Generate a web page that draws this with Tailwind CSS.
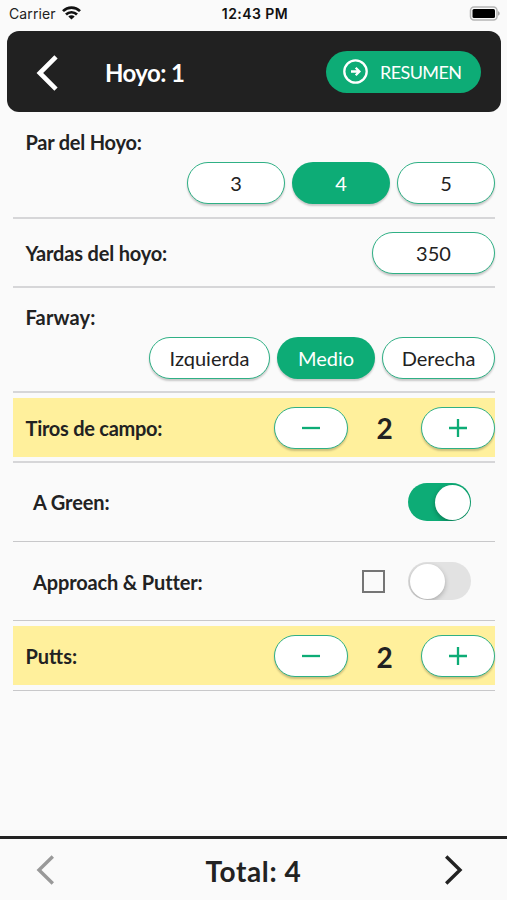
<!DOCTYPE html>
<html lang="es">
<head>
<meta charset="utf-8">
<title>Hoyo 1</title>
<script src="https://cdn.jsdelivr.net/npm/@tailwindcss/browser@4"></script>
</head>
<body class="bg-[#fafafa]">
<div class="w-[507px] h-[900px] flex flex-col bg-[#fafafa] text-[#222] overflow-hidden font-['Lato','Noto_Sans',sans-serif] text-[20px] leading-[24px]">
  <!-- status bar -->
  <div class="h-[31px] shrink-0 grid grid-cols-[1fr_auto_1fr] items-center pl-[9px] pr-[7px] pb-[4px] font-['Inter',sans-serif] text-[14px] leading-[18px] text-[#222]">
    <div class="flex items-center gap-[6px]">
      <span class="tracking-[0.1px]">Carrier</span>
      <svg class="w-[19px] h-[14px] -mt-[2px]" viewBox="0 0 19 14" fill="none" stroke="#111" stroke-width="2.7"><path d="M1 5.100a12.200 12.200 0 0 1 17 0"/><path d="M4 8.500a7.800 7.800 0 0 1 11 0"/><path d="M9.500 13.600 6.300 10.600a4.600 4.600 0 0 1 6.400 0z" fill="#111" stroke="none"/></svg>
    </div>
    <span class="font-semibold text-[#111] tracking-[0.45px] -mr-px">12:43 PM</span>
    <svg class="w-[31px] h-[15px] justify-self-end" viewBox="0 0 31 15"><rect x="1.500" y="1" width="26.500" height="13" rx="3.500" fill="#fafafa" stroke="#b5b5b5" stroke-width="1.500"/><rect x="3.500" y="3" width="22.500" height="9" rx="1.500" fill="#000"/><path d="M29 5.300c2.300.7 2.300 3.700 0 4.400z" fill="#aaa"/></svg>
  </div>
  <!-- header -->
  <header class="ml-[7px] mr-[6px] h-[81px] shrink-0 rounded-[12px] bg-[#212121] flex items-center pl-[29px] pr-[20px] text-white">
    <svg class="w-[24px] h-[36px] mt-[3px]" viewBox="0 0 24 36" fill="none" stroke="#fff" stroke-width="4.600"><path d="M20 1.800 3.800 18 20 34.200"/></svg>
    <h1 class="ml-[45px] text-[24px] leading-[28px] font-bold tracking-[-0.6px] mt-[2px]">Hoyo: 1</h1>
    <button class="ml-auto w-[155px] h-[42px] rounded-full bg-[#0dac76] flex items-center pl-[17px] gap-[12px] text-[18px]">
      <svg class="w-[25px] h-[25px]" viewBox="0 0 25 25" fill="none" stroke="#fff" stroke-width="2.300"><circle cx="12.500" cy="12.500" r="11.200"/><path d="M8 12.500h7.500M12.700 8.800l3.700 3.700-3.700 3.700"/></svg>
      <span class="tracking-[-0.6px] mt-[1px]">RESUMEN</span>
    </button>
  </header>
  <!-- hole form -->
  <main class="ml-[13px] mr-[12px] flex flex-col">
    <section class="h-[107px] border-b-2 border-[#d6d6d8] pl-[12.5px] pt-[18px]">
      <h2 class="font-bold tracking-[-0.22px]">Par del Hoyo:</h2>
      <div class="flex justify-end gap-[7px] mt-[8px]">
        <button class="w-[98px] h-[42px] rounded-full border-[1.5px] border-[#2fb085] bg-white shadow-[0_2px_2px_rgba(0,0,0,0.2)]">3</button>
        <button class="w-[98px] h-[42px] rounded-full bg-[#0dac76] text-white shadow-[0_2px_2px_rgba(0,0,0,0.2)]">4</button>
        <button class="w-[98px] h-[42px] rounded-full border-[1.5px] border-[#2fb085] bg-white shadow-[0_2px_2px_rgba(0,0,0,0.2)]">5</button>
      </div>
    </section>
    <section class="h-[69px] border-b-2 border-[#d6d6d8] pl-[12.5px] flex items-center justify-between">
      <h2 class="font-bold tracking-[-0.17px]">Yardas del hoyo:</h2>
      <button class="w-[123px] h-[42px] rounded-full border-[1.5px] border-[#2fb085] bg-white shadow-[0_2px_2px_rgba(0,0,0,0.2)] mt-px">350</button>
    </section>
    <section class="h-[105px] border-b-2 border-[#d6d6d8] pl-[12.5px] pt-[17px]">
      <h2 class="font-bold tracking-[0.15px]">Farway:</h2>
      <div class="flex justify-end gap-[7px] mt-[8px]">
        <button class="w-[121px] h-[42px] rounded-full border-[1.5px] border-[#2fb085] bg-white shadow-[0_2px_2px_rgba(0,0,0,0.2)]">Izquierda</button>
        <button class="w-[98px] h-[42px] rounded-full bg-[#0dac76] text-white shadow-[0_2px_2px_rgba(0,0,0,0.2)]">Medio</button>
        <button class="w-[113px] h-[42px] rounded-full border-[1.5px] border-[#2fb085] bg-white shadow-[0_2px_2px_rgba(0,0,0,0.2)]">Derecha</button>
      </div>
    </section>
    <section class="h-[70px] border-b-2 border-[#d6d6d8] pt-[5px]">
      <div class="h-[59px] bg-[#fff09c] pl-[12.5px] flex items-center">
        <h2 class="font-bold tracking-[-0.27px] mr-auto">Tiros de campo:</h2>
        <button class="w-[74px] h-[42px] rounded-full border-[1.5px] border-[#2fb085] bg-white flex items-center justify-center shadow-[0_2px_2px_rgba(0,0,0,0.2)]"><svg class="w-[20px] h-[20px]" viewBox="0 0 20 20" stroke="#0dac76" stroke-width="2.300"><path d="M1 10h18"/></svg></button>
        <span class="w-[73px] text-center text-[28px] leading-[32px] font-bold">2</span>
        <button class="w-[74px] h-[42px] rounded-full border-[1.5px] border-[#2fb085] bg-white flex items-center justify-center shadow-[0_2px_2px_rgba(0,0,0,0.2)]"><svg class="w-[20px] h-[20px]" viewBox="0 0 20 20" stroke="#0dac76" stroke-width="2.300"><path d="M1 10h18M10 1v18"/></svg></button>
      </div>
    </section>
    <section class="h-[79px] border-b border-[#c8c8ca] pl-[20px] pr-[24px] flex items-center justify-between">
      <h2 class="font-bold tracking-[-0.12px]">A Green:</h2>
      <div class="w-[63px] h-[38px] rounded-full bg-[#0dac76] p-[1.5px] flex justify-end overflow-hidden"><span class="w-[35px] h-[35px] rounded-full bg-white shadow-[0_2px_5px_rgba(0,0,0,0.3)]"></span></div>
    </section>
    <section class="h-[79px] border-b border-[#c8c8ca] pl-[20px] pr-[24px] flex items-center">
      <h2 class="font-bold tracking-[-0.15px] mr-auto mt-px">Approach &amp; Putter:</h2>
      <span class="w-[23px] h-[23px] border-2 border-[#757575] mr-[23px]"></span>
      <div class="w-[63px] h-[38px] rounded-full bg-[#e2e2e2] p-[1.5px] flex overflow-hidden"><span class="w-[35px] h-[35px] rounded-full bg-white shadow-[0_2px_5px_rgba(0,0,0,0.25)]"></span></div>
    </section>
    <section class="h-[70px] border-b border-[#c8c8ca] pt-[5px]">
      <div class="h-[59px] bg-[#fff09c] pl-[12.5px] flex items-center">
        <h2 class="font-bold mr-auto">Putts:</h2>
        <button class="w-[74px] h-[42px] rounded-full border-[1.5px] border-[#2fb085] bg-white flex items-center justify-center shadow-[0_2px_2px_rgba(0,0,0,0.2)]"><svg class="w-[20px] h-[20px]" viewBox="0 0 20 20" stroke="#0dac76" stroke-width="2.300"><path d="M1 10h18"/></svg></button>
        <span class="w-[73px] text-center text-[28px] leading-[32px] font-bold mt-[2px]">2</span>
        <button class="w-[74px] h-[42px] rounded-full border-[1.5px] border-[#2fb085] bg-white flex items-center justify-center shadow-[0_2px_2px_rgba(0,0,0,0.2)]"><svg class="w-[20px] h-[20px]" viewBox="0 0 20 20" stroke="#0dac76" stroke-width="2.300"><path d="M1 10h18M10 1v18"/></svg></button>
      </div>
    </section>
  </main>
  <!-- total -->
  <footer class="mt-auto h-[64px] shrink-0 border-t-[3px] border-[#222] flex items-center justify-between pl-[36px] pr-[44px]">
    <svg class="w-[20px] h-[30px]" viewBox="0 0 20 30" fill="none" stroke="#999" stroke-width="3.400"><path d="M16.800 1.500 3 15l13.800 13.500"/></svg>
    <span class="text-[28px] leading-[34px] font-bold tracking-[0.6px] ml-[8px] mt-[2px]">Total: 4</span>
    <svg class="w-[20px] h-[30px]" viewBox="0 0 20 30" fill="none" stroke="#222" stroke-width="3.400"><path d="M3.200 1.500 17 15 3.200 28.500"/></svg>
  </footer>
</div>
</body>
</html>
